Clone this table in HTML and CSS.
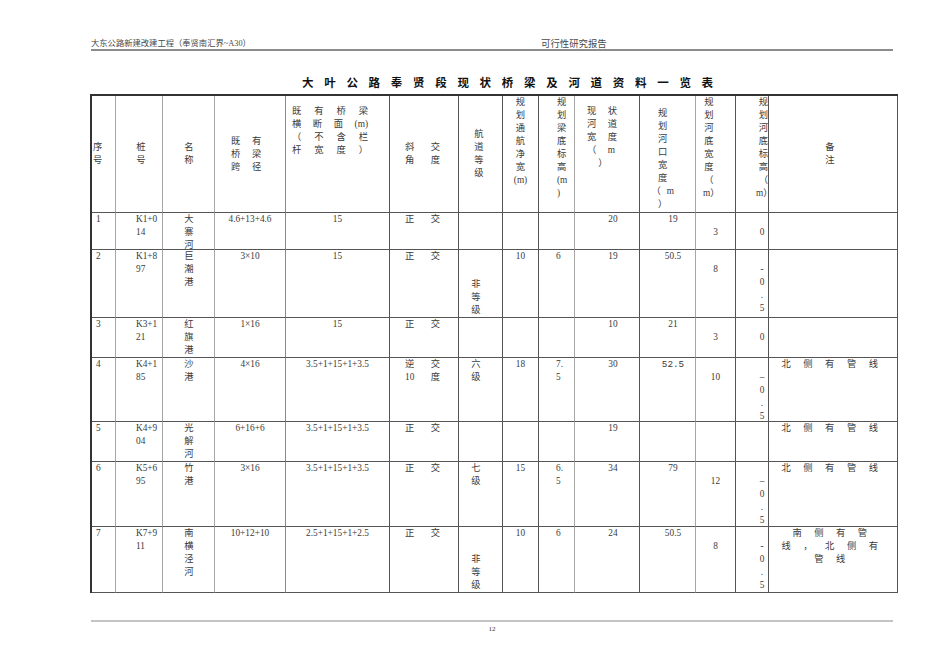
FILE: index.html
```html
<!DOCTYPE html>
<html lang="zh-CN">
<head>
<meta charset="utf-8">
<title>大叶公路奉贤段现状桥梁及河道资料一览表</title>
<link rel="stylesheet" href="styles.css">
</head>
<body>
<div class="page">
  <header class="runhead">
    <span class="rh-left">大东公路新建改建工程（奉贤南汇界~A30）</span>
    <span class="rh-right">可行性研究报告</span>
  </header>

  <h1 class="title">大叶公路奉贤段现状桥梁及河道资料一览表</h1>

  <div class="sheet">
    <div class="row head">
      <div>序号</div>
      <div>桩号</div>
      <div>名称</div>
      <div>既有桥梁跨径</div>
      <div class="top">既 有 桥 梁<br>横 断 面 (m)<br>（ 不 含 栏<br>杆 宽 度 ）</div>
      <div>斜 交<br>角 度</div>
      <div>航道等级</div>
      <div class="top">规划通航净宽(m)</div>
      <div class="top">规划梁底标高(m)</div>
      <div class="top">现状河道宽度（m）</div>
      <div class="top">规划河口宽度（m）</div>
      <div class="top">规划河底宽度（m）</div>
      <div class="top">规划河底标高（m）</div>
      <div>备注</div>
    </div>

    <div class="row">
      <div>1</div><div>K1+014</div><div>大寨河</div><div>4.6+13+4.6</div><div>15</div><div>正 交</div>
      <div></div><div></div><div></div><div>20</div><div>19</div><div class="s1">3</div><div class="s1">0</div><div></div>
    </div>

    <div class="row">
      <div>2</div><div>K1+897</div><div>巨潮港</div><div>3×10</div><div>15</div><div>正 交</div>
      <div class="bot">非等级</div><div>10</div><div>6</div><div>19</div><div>50.5</div><div class="s1">8</div><div class="s1">-0.5</div><div></div>
    </div>

    <div class="row">
      <div>3</div><div>K3+121</div><div>红旗港</div><div>1×16</div><div>15</div><div>正 交</div>
      <div></div><div></div><div></div><div>10</div><div>21</div><div class="s1">3</div><div class="s1">0</div><div></div>
    </div>

    <div class="row">
      <div>4</div><div>K4+185</div><div>沙港</div><div>4×16</div><div>3.5+1+15+1+3.5</div><div>逆 交<br>10 度</div>
      <div>六级</div><div>18</div><div>7.5</div><div>30</div><div><span class="mono">52.5</span></div><div class="s1">10</div><div class="s1">–0.5</div><div>北侧有管线</div>
    </div>

    <div class="row">
      <div>5</div><div>K4+904</div><div>光解河</div><div>6+16+6</div><div>3.5+1+15+1+3.5</div><div>正 交</div>
      <div></div><div></div><div></div><div>19</div><div></div><div></div><div></div><div>北侧有管线</div>
    </div>

    <div class="row">
      <div>6</div><div>K5+695</div><div>竹港</div><div>3×16</div><div>3.5+1+15+1+3.5</div><div>正 交</div>
      <div>七级</div><div>15</div><div>6.5</div><div>34</div><div>79</div><div class="s1">12</div><div class="s1">–0.5</div><div>北侧有管线</div>
    </div>

    <div class="row">
      <div>7</div><div>K7+911</div><div>南横泾河</div><div>10+12+10</div><div>2.5+1+15+1+2.5</div><div>正 交</div>
      <div class="bot">非等级</div><div>10</div><div>6</div><div>24</div><div>50.5</div><div class="s1">8</div><div class="s1">-0.5</div><div>南侧有管线，北侧有管线</div>
    </div>
  </div>

  <footer class="runfoot">12</footer>
</div>
</body>
</html>
```

FILE: styles.css
```css
* { box-sizing: border-box; }

html, body {
  margin: 0;
  padding: 0;
  background: #fff;
}

body {
  font-family: "Liberation Serif", "Noto Sans CJK SC", serif;
  color: #3a3a3a;
}

.page {
  width: 808px;
  margin-left: 90px;
  padding-top: 39px;
}

/* running header */
.runhead {
  display: flex;
  margin: 0 5px 0 1px;
  border-bottom: 2px solid #8c8c8c;
  line-height: 10px;
  color: #4a4a4a;
}
.rh-left { width: 450px; font-size: 8.3px; }
.rh-right { font-size: 9.4px; }

/* title */
.title {
  margin: 24px 0 5px;
  padding-left: 212px;
  font-family: "Noto Sans CJK SC", sans-serif;
  font-weight: bold;
  font-size: 11.5px;
  line-height: 14px;
  letter-spacing: 10.7px;
  color: #111;
}

/* table */
.sheet {
  display: grid;
  grid-template-columns: 24px 47px 52px 71px 104px 69px 44px 36px 36px 65px 56px 40px 33px 129px;
  grid-template-rows: 117px 37px 68px 40px 64px 40px 65px 66px;
  width: 808px;
  border-top: 2px solid #333;
  border-left: 2px solid #333;
  font-size: 9.3px;
  line-height: 13px;
}

.row { display: contents; }

.row > div {
  min-width: 0;
  border-right: 1px solid #555;
  border-bottom: 1px solid #555;
  overflow-wrap: anywhere;
}

.row > :nth-child(1),
.row > :nth-child(2),
.row > :nth-child(3),
.row > :nth-child(9),
.row > :nth-child(11) { border-right-color: #a6a6a6; }
.row > :nth-child(4) { border-right-color: #8a8a8a; }

/* data columns */
.row > :nth-child(1) { padding-left: 4px; }
.row > :nth-child(2) { padding: 0 3px 0 20px; }
.row > :nth-child(3) { padding: 0 20px 0 21px; text-align: center; }
.row > :nth-child(4) { text-align: center; }
.row > :nth-child(5) { text-align: center; }
.row > :nth-child(6) { padding: 0 18px 0 15px; text-align: justify; text-align-last: justify; }
.row > :nth-child(7) { padding: 0 21px 0 12px; text-align: center; }
.row > :nth-child(8) { text-align: center; }
.row > :nth-child(9) { padding: 0 10px 0 17px; }
.row > :nth-child(10) { padding-left: 12px; text-align: center; }
.row > :nth-child(11) { padding-left: 11px; text-align: center; }
.row > :nth-child(12) { text-align: center; }
.row > :nth-child(13) { padding: 0 3px 0 23px; text-align: center; }
.row > :nth-child(14) { padding: 0 3px 0 9px; text-align: center; letter-spacing: 12.5px; }

.row > .s1 { padding-top: 13px; }
.row > .bot {
  display: flex;
  align-items: flex-end;
  justify-content: center;
}

.mono { font-family: "Liberation Mono", monospace; }

/* header row */
.head > div {
  display: flex;
  flex-direction: column;
  justify-content: center;
  letter-spacing: 0;
}
.head > .top { justify-content: flex-start; }

.head > :nth-child(1) { padding: 0 12px 0 1px; text-align: left; }
.head > :nth-child(2) { padding: 0 16px 0 20px; text-align: center; }
.head > :nth-child(3) { padding: 0 20px 0 21px; text-align: center; }
.head > :nth-child(4) { padding: 0 11px 0 16px; text-align: left; letter-spacing: 11.7px; }
.head > :nth-child(5) { padding: 9px 21px 0 6px; text-align: justify; text-align-last: justify; }
.head > :nth-child(6) { padding: 0 18px 0 15px; }
.head > :nth-child(7) { padding: 0 18px 0 15px; text-align: center; }
.head > :nth-child(8) { padding: 0 10.5px; text-align: center; }
.head > :nth-child(9) { padding: 0 6px 0 18px; text-align: left; }
.head > :nth-child(10) { padding: 9px 9px 0 12px; text-align: left; text-align-last: center; letter-spacing: 11.4px; }
.head > :nth-child(11) { padding: 11px 14.5px 0 11px; text-align: center; letter-spacing: 6px; }
.head > :nth-child(12) { padding: 0 20px 0 7px; text-align: center; }
.head > :nth-child(13) { padding: 0 0 0 20px; text-align: right; }
.head > :nth-child(14) { padding: 0 62px 0 56px; text-align: center; letter-spacing: 0; }

/* running footer */
.runfoot {
  margin: 27px 5px 0 1px;
  padding-top: 2px;
  border-top: 2px solid #c4c4c4;
  text-align: center;
  font-size: 7px;
  line-height: 10px;
  color: #333;
}
```
